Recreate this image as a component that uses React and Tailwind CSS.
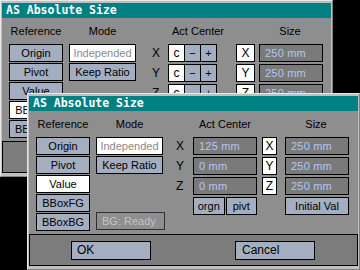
import React from "react";

const SANS = "font-['Liberation_Sans',Arial,sans-serif]";
const MONO = "font-['DejaVu_Sans_Mono',monospace]";

function Btn({ children, white, dim, className = "" }) {
  return (
    <div
      className={`h-[18px] border border-black flex items-center justify-center text-[11px] leading-none ${
        white ? "bg-white" : "bg-[#a3afc0]"
      } ${dim ? "text-[#8a8a8a]" : "text-black"} ${className}`}
    >
      {children}
    </div>
  );
}

function Field({ children, className = "" }) {
  return (
    <div
      className={`h-[18px] w-[64px] border border-black bg-[#7a7a7a] flex items-center pl-[5px] text-[11px] leading-none tracking-[0.2px] text-[#b4c6f4] ${className}`}
    >
      {children}
    </div>
  );
}

function AxisBox({ children, className = "" }) {
  return (
    <div
      className={`h-[18px] border border-black bg-white flex items-center justify-center text-[12px] leading-none text-black ${className}`}
    >
      {children}
    </div>
  );
}

function Window({ back }) {
  const refs = back
    ? [
        ["Origin", false],
        ["Pivot", false],
        ["Value", false],
        ["BBoxFG", true],
        ["BBoxBG", false],
      ]
    : [
        ["Origin", false],
        ["Pivot", false],
        ["Value", true],
        ["BBoxFG", false],
        ["BBoxBG", false],
      ];
  const axes = ["X", "Y", "Z"];
  const actVals = ["125 mm", "0 mm", "0 mm"];
  return (
    <div className={`w-[333px] h-[177px] bg-[#c0c0c0] border border-t-[#e8e8e8] border-l-[#e8e8e8] border-r-[#808080] border-b-[#808080] px-[1px] pt-[2px] pb-[3px] flex flex-col ${SANS}`}>
      <div className="h-[15px] bg-[#008080] flex items-center pl-[4px]">
        <span className={`${MONO} font-bold text-[11.5px] leading-none text-white`}>AS Absolute Size</span>
      </div>
      <div className="bg-[#8e8e8e] h-[123px] flex pl-[7px]">
        {/* Reference */}
        <div className="w-[54px] flex flex-col">
          <div className="h-[26px] flex items-center justify-center text-[11px] text-black">Reference</div>
          <div className="flex flex-col gap-[1px]">
            {refs.map(([t, w]) => (
              <Btn key={t} white={w}>{t}</Btn>
            ))}
          </div>
        </div>
        {/* Mode */}
        <div className="w-[67px] ml-[6px] flex flex-col">
          <div className="h-[26px] flex items-center justify-center text-[11px] text-black">Mode</div>
          <div className="flex flex-col gap-[1px]">
            <Btn white dim>Independed</Btn>
            <Btn>Keep Ratio</Btn>
          </div>
          <div className="mt-[38px] h-[18px] w-[69px] border border-[#303030] flex items-center pl-[5px] text-[11px] leading-none text-[#c4c4c4]">
            BG: Ready
          </div>
        </div>
        {/* Act Center */}
        <div className="w-[81px] ml-[13px] flex flex-col">
          <div className="h-[26px] flex items-center justify-center pl-[17px] text-[11px] text-black">Act Center</div>
          <div className="flex flex-col gap-[2px]">
            {axes.map((a, i) =>
              back ? (
                <div key={a} className="flex items-center h-[18px]">
                  <div className="w-[19px] pl-[3px] text-[12px] leading-none text-black">{a}</div>
                  <AxisBox className="w-[17px] text-[#8a8a8a] text-[11px]">c</AxisBox>
                  <Btn className="w-[17px] -ml-px">−</Btn>
                  <Btn className="w-[17px] -ml-px">+</Btn>
                </div>
              ) : (
                <div key={a} className="flex items-center h-[18px]">
                  <div className="w-[17px] text-[12px] leading-none text-black">{a}</div>
                  <Field>{actVals[i]}</Field>
                </div>
              )
            )}
            <div className="flex pl-[17px] gap-[1px]">
              <Btn className="w-[32px]">orgn</Btn>
              <Btn className="w-[32px]">pivt</Btn>
            </div>
          </div>
        </div>
        {/* Size */}
        <div className={`w-[88px] ${back ? "ml-[6px]" : "ml-[5px]"} flex flex-col`}>
          <div className="h-[26px] flex items-center justify-center pl-[20px] text-[11px] text-black">Size</div>
          <div className="flex flex-col gap-[2px]">
            {axes.map((a) => (
              <div key={a} className={`flex items-center h-[18px] ${back ? "gap-[4px]" : "gap-[8px]"}`}>
                <AxisBox className={back ? "w-[19px]" : "w-[15px]"}>{a}</AxisBox>
                <Field>250 mm</Field>
              </div>
            ))}
            <div className="flex pl-[23px]">
              <Btn className="w-[64px]">Initial Val</Btn>
            </div>
          </div>
        </div>
      </div>
      <div className="h-[32px] bg-[#7c7c7c] border border-black flex items-center">
        <div className="ml-[41px] w-[80px] h-[19px] border border-black bg-[#a3afc0] flex items-center pl-[5px] text-[12px] leading-none text-black">OK</div>
        <div className="ml-[84px] w-[80px] h-[19px] border border-black bg-[#a3afc0] flex items-center pl-[6px] text-[12px] leading-none text-black">Cancel</div>
      </div>
    </div>
  );
}

export default function App() {
  return (
    <div className="relative w-[360px] h-[270px] bg-black overflow-hidden">
      <div className="absolute left-0 top-0">
        <Window back />
      </div>
      <div className="absolute left-[27px] top-[93px]">
        <Window />
      </div>
    </div>
  );
}
